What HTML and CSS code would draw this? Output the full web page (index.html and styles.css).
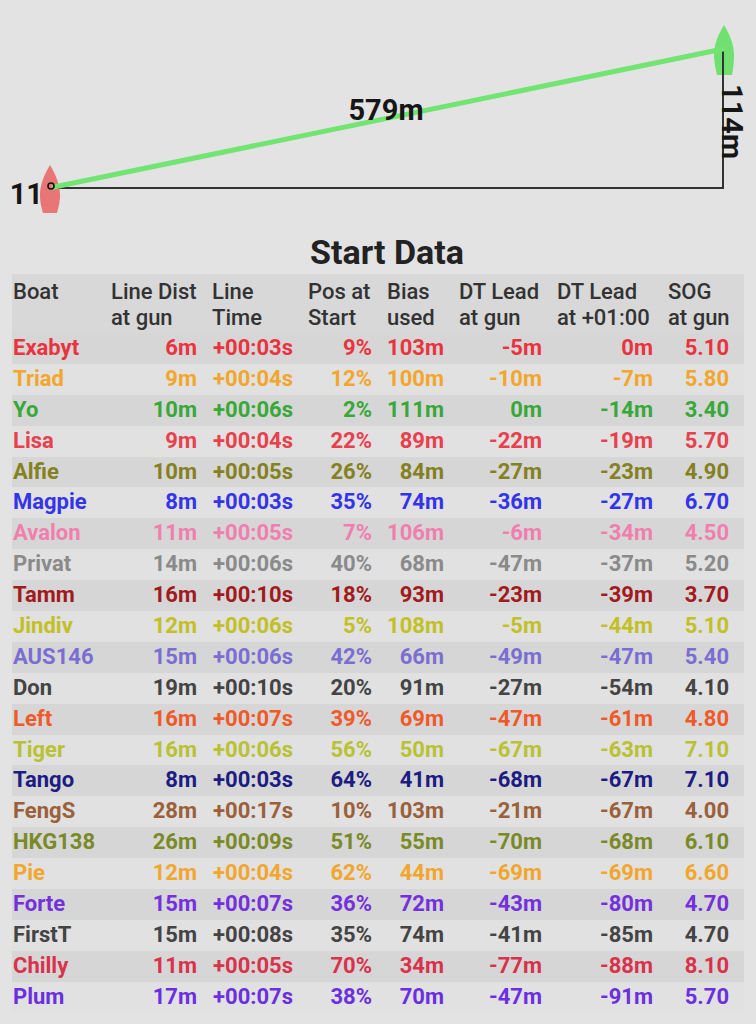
FILE: index.html
```html
<!DOCTYPE html>
<html>
<head>
<meta charset="utf-8">
<link rel="stylesheet" href="styles.css">
</head>
<body>
<div class="diagram">
  <svg width="756" height="226" viewBox="0 0 756 226" xmlns="http://www.w3.org/2000/svg">
    <path class="boat-red" d="M50 165 C56 175 60 185 60 195 C60 203 58 209 57 213 L43 213 C42 209 40 203 40 195 C40 185 44 175 50 165 Z"/>
    <path class="boat-green" d="M724 25 C730 35 734 45 734 55 C734 63 733 70 732 75 L717 75 C716 70 714 63 714 55 C714 45 718 35 724 25 Z"/>
    <line class="base" x1="54" y1="188" x2="724" y2="188"/>
    <line class="base" x1="723" y1="48" x2="723" y2="189"/>
    <line class="bias" x1="54" y1="187" x2="723" y2="49"/>
    <circle class="deg" cx="51" cy="186" r="3"/>
    <text class="lbl" x="43" y="204" text-anchor="end">11</text>
    <text class="lbl" x="386" y="120" text-anchor="middle">579m</text>
    <text class="lbl" transform="translate(722 84) rotate(90)">114m</text>
  </svg>
</div>
<h1 class="title">Start Data</h1>
<div class="table">
  <div class="row head">
    <div>Boat</div><div>Line Dist<br>at gun</div><div>Line<br>Time</div><div>Pos at<br>Start</div><div>Bias<br>used</div><div>DT Lead<br>at gun</div><div>DT Lead<br>at +01:00</div><div>SOG<br>at gun</div>
  </div>
  <div class="row alt c-red"><div>Exabyt</div><div>6m</div><div>+00:03s</div><div>9%</div><div>103m</div><div>-5m</div><div>0m</div><div>5.10</div></div>
  <div class="row c-orange"><div>Triad</div><div>9m</div><div>+00:04s</div><div>12%</div><div>100m</div><div>-10m</div><div>-7m</div><div>5.80</div></div>
  <div class="row alt c-green"><div>Yo</div><div>10m</div><div>+00:06s</div><div>2%</div><div>111m</div><div>0m</div><div>-14m</div><div>3.40</div></div>
  <div class="row c-red2"><div>Lisa</div><div>9m</div><div>+00:04s</div><div>22%</div><div>89m</div><div>-22m</div><div>-19m</div><div>5.70</div></div>
  <div class="row alt c-olive"><div>Alfie</div><div>10m</div><div>+00:05s</div><div>26%</div><div>84m</div><div>-27m</div><div>-23m</div><div>4.90</div></div>
  <div class="row c-blue"><div>Magpie</div><div>8m</div><div>+00:03s</div><div>35%</div><div>74m</div><div>-36m</div><div>-27m</div><div>6.70</div></div>
  <div class="row alt c-pink"><div>Avalon</div><div>11m</div><div>+00:05s</div><div>7%</div><div>106m</div><div>-6m</div><div>-34m</div><div>4.50</div></div>
  <div class="row c-gray"><div>Privat</div><div>14m</div><div>+00:06s</div><div>40%</div><div>68m</div><div>-47m</div><div>-37m</div><div>5.20</div></div>
  <div class="row alt c-darkred"><div>Tamm</div><div>16m</div><div>+00:10s</div><div>18%</div><div>93m</div><div>-23m</div><div>-39m</div><div>3.70</div></div>
  <div class="row c-yellow"><div>Jindiv</div><div>12m</div><div>+00:06s</div><div>5%</div><div>108m</div><div>-5m</div><div>-44m</div><div>5.10</div></div>
  <div class="row alt c-lavender"><div>AUS146</div><div>15m</div><div>+00:06s</div><div>42%</div><div>66m</div><div>-49m</div><div>-47m</div><div>5.40</div></div>
  <div class="row c-dark"><div>Don</div><div>19m</div><div>+00:10s</div><div>20%</div><div>91m</div><div>-27m</div><div>-54m</div><div>4.10</div></div>
  <div class="row alt c-orangered"><div>Left</div><div>16m</div><div>+00:07s</div><div>39%</div><div>69m</div><div>-47m</div><div>-61m</div><div>4.80</div></div>
  <div class="row c-lime"><div>Tiger</div><div>16m</div><div>+00:06s</div><div>56%</div><div>50m</div><div>-67m</div><div>-63m</div><div>7.10</div></div>
  <div class="row alt c-navy"><div>Tango</div><div>8m</div><div>+00:03s</div><div>64%</div><div>41m</div><div>-68m</div><div>-67m</div><div>7.10</div></div>
  <div class="row c-brown"><div>FengS</div><div>28m</div><div>+00:17s</div><div>10%</div><div>103m</div><div>-21m</div><div>-67m</div><div>4.00</div></div>
  <div class="row alt c-olivegreen"><div>HKG138</div><div>26m</div><div>+00:09s</div><div>51%</div><div>55m</div><div>-70m</div><div>-68m</div><div>6.10</div></div>
  <div class="row c-orange"><div>Pie</div><div>12m</div><div>+00:04s</div><div>62%</div><div>44m</div><div>-69m</div><div>-69m</div><div>6.60</div></div>
  <div class="row alt c-purple"><div>Forte</div><div>15m</div><div>+00:07s</div><div>36%</div><div>72m</div><div>-43m</div><div>-80m</div><div>4.70</div></div>
  <div class="row c-dark"><div>FirstT</div><div>15m</div><div>+00:08s</div><div>35%</div><div>74m</div><div>-41m</div><div>-85m</div><div>4.70</div></div>
  <div class="row alt c-crimson"><div>Chilly</div><div>11m</div><div>+00:05s</div><div>70%</div><div>34m</div><div>-77m</div><div>-88m</div><div>8.10</div></div>
  <div class="row c-plum"><div>Plum</div><div>17m</div><div>+00:07s</div><div>38%</div><div>70m</div><div>-47m</div><div>-91m</div><div>5.70</div></div>
</div>
</body>
</html>
```
FILE: styles.css
```css
html, body {
  margin: 0;
  padding: 0;
  background: #e3e3e3;
}
body {
  width: 756px;
  height: 1024px;
  overflow: hidden;
  font-family: Roboto, "Liberation Sans", sans-serif;
}
.diagram svg {
  display: block;
}
.boat-red { fill: #e87676; }
.boat-green { fill: #66e066; opacity: 0.92; }
.base { stroke: #333; stroke-width: 2; }
.bias { stroke: #72e472; stroke-width: 5; stroke-linecap: round; }
.deg { fill: none; stroke: #111; stroke-width: 1.6; }
.lbl {
  font-family: Roboto, "Liberation Sans", sans-serif;
  font-size: 29px;
  font-weight: 700;
  fill: #161616;
}
.title {
  margin: 0;
  padding: 4px 0 0 18px;
  box-sizing: border-box;
  height: 48px;
  line-height: 44px;
  text-align: center;
  font-size: 34px;
  font-weight: 700;
  color: #222;
}
.table {
  margin-left: 12px;
  width: 732px;
}
.row {
  display: grid;
  grid-template-columns: 99px 101px 96px 79px 72px 98px 111px 76px;
  height: 30.9px;
  line-height: 30.9px;
  font-size: 22px;
  font-weight: 700;
  background: #e1e1e1;
}
.row > div {
  padding-right: 15px;
  text-align: right;
  white-space: nowrap;
}
.row > div:first-child {
  text-align: left;
  padding-left: 1px;
}
.row.alt { background: #d6d6d6; }
.row.head {
  height: 59px;
  line-height: 26px;
  padding-top: 5px;
  box-sizing: border-box;
  background: #d8d8d8;
  color: #333;
  font-weight: 500;
}
.row.head > div {
  text-align: left;
  padding-right: 0;
}
.c-red { color: #ea3340; }
.c-red2 { color: #e8404c; }
.c-orange { color: #f2a62c; }
.c-green { color: #38a838; }
.c-olive { color: #858020; }
.c-blue { color: #3434ea; }
.c-pink { color: #f07fb0; }
.c-gray { color: #8a8a8a; }
.c-darkred { color: #a01a1e; }
.c-yellow { color: #c2c024; }
.c-lavender { color: #7a6ed2; }
.c-dark { color: #444; }
.c-orangered { color: #f05a2a; }
.c-lime { color: #b8c232; }
.c-navy { color: #1c1c82; }
.c-brown { color: #9a603a; }
.c-olivegreen { color: #7a8a26; }
.c-purple { color: #7430dc; }
.c-crimson { color: #d8324c; }
.c-plum { color: #6a2fe0; }
```
